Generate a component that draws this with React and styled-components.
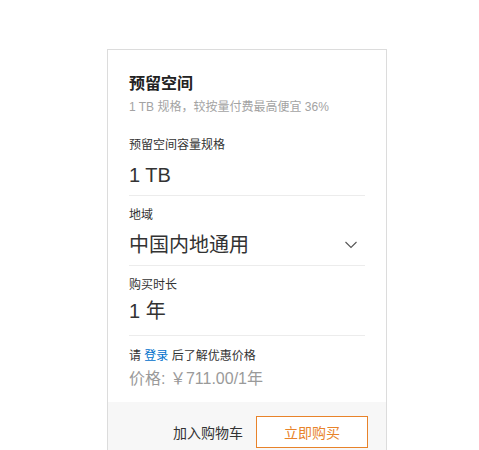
import React from 'react';
import styled, { createGlobalStyle } from 'styled-components';

const GlobalStyle = createGlobalStyle`
  body {
    margin: 0;
    background: #fff;
    font-family: "Liberation Sans", Arial, "Noto Sans CJK SC", sans-serif;
    color: #333;
  }
`;

const Page = styled.div`
  padding: 49px 0 0 107px;
  height: 450px;
  box-sizing: border-box;
  overflow: hidden;
`;

const Card = styled.div`
  width: 280px;
  box-sizing: border-box;
  border: 1px solid #dcdcdc;
  background: #fff;
`;

const Body = styled.div`
  padding: 22px 21px 11px;
`;

const Title = styled.h3`
  margin: 0;
  font-size: 16px;
  line-height: 24px;
  font-weight: bold;
  color: #222;
`;

const Subtitle = styled.div`
  margin-top: 2px;
  font-size: 12px;
  line-height: 18px;
  color: #a3a3a3;
`;

const Options = styled.div`
  margin-top: 10px;
`;

const Option = styled.div`
  padding: 10px 0 5px;
  border-bottom: 1px solid #ececec;
`;

const Label = styled.div`
  font-size: 12px;
  line-height: 18px;
  color: #333;
`;

const Value = styled.div`
  margin-top: ${p => (p.$tight ? '2px' : '6px')};
  margin-bottom: ${p => (p.$tight ? '4px' : '0')};
  display: flex;
  align-items: center;
  justify-content: space-between;
  font-size: 20px;
  line-height: 30px;
  color: #333;
`;

const Chevron = styled.svg`
  width: 12px;
  height: 8px;
  margin-right: 8px;
`;

const Login = styled.div`
  margin-top: 11px;
  font-size: 12px;
  line-height: 18px;
  color: #333;
`;

const Link = styled.a`
  color: #0070cc;
  text-decoration: none;
`;

const Price = styled.div`
  margin-top: 2px;
  font-size: 16px;
  line-height: 24px;
  color: #9a9a9a;
`;

const Footer = styled.div`
  display: flex;
  align-items: center;
  justify-content: flex-end;
  gap: 13px;
  padding: 14px 18px 14px 0;
  background: #f7f7f7;
`;

const CartLink = styled.span`
  font-size: 14px;
  color: #333;
`;

const BuyButton = styled.button`
  width: 112px;
  height: 32px;
  box-sizing: border-box;
  border: 1px solid #e8832a;
  background: #fff;
  color: #e8832a;
  font-family: inherit;
  font-size: 14px;
  padding: 0;
  cursor: pointer;
`;

const options = [
  { label: '预留空间容量规格', value: '1 TB' },
  { label: '地域', value: '中国内地通用', select: true },
  { label: '购买时长', value: '1 年', tight: true }
];

export default function App() {
  return (
    <Page>
      <GlobalStyle />
      <Card>
        <Body>
          <Title>预留空间</Title>
          <Subtitle>1 TB 规格，较按量付费最高便宜 36%</Subtitle>
          <Options>
            {options.map(o => (
              <Option key={o.label}>
                <Label>{o.label}</Label>
                <Value $tight={o.tight}>
                  <span>{o.value}</span>
                  {o.select && (
                    <Chevron viewBox="0 0 12 8">
                      <path d="M0.5 1 L6 6.5 L11.5 1" fill="none" stroke="#555" strokeWidth="1.1" />
                    </Chevron>
                  )}
                </Value>
              </Option>
            ))}
          </Options>
          <Login>
            请 <Link href="#">登录</Link> 后了解优惠价格
          </Login>
          <Price>价格: ￥711.00/1年</Price>
        </Body>
        <Footer>
          <CartLink>加入购物车</CartLink>
          <BuyButton>立即购买</BuyButton>
        </Footer>
      </Card>
    </Page>
  );
}
